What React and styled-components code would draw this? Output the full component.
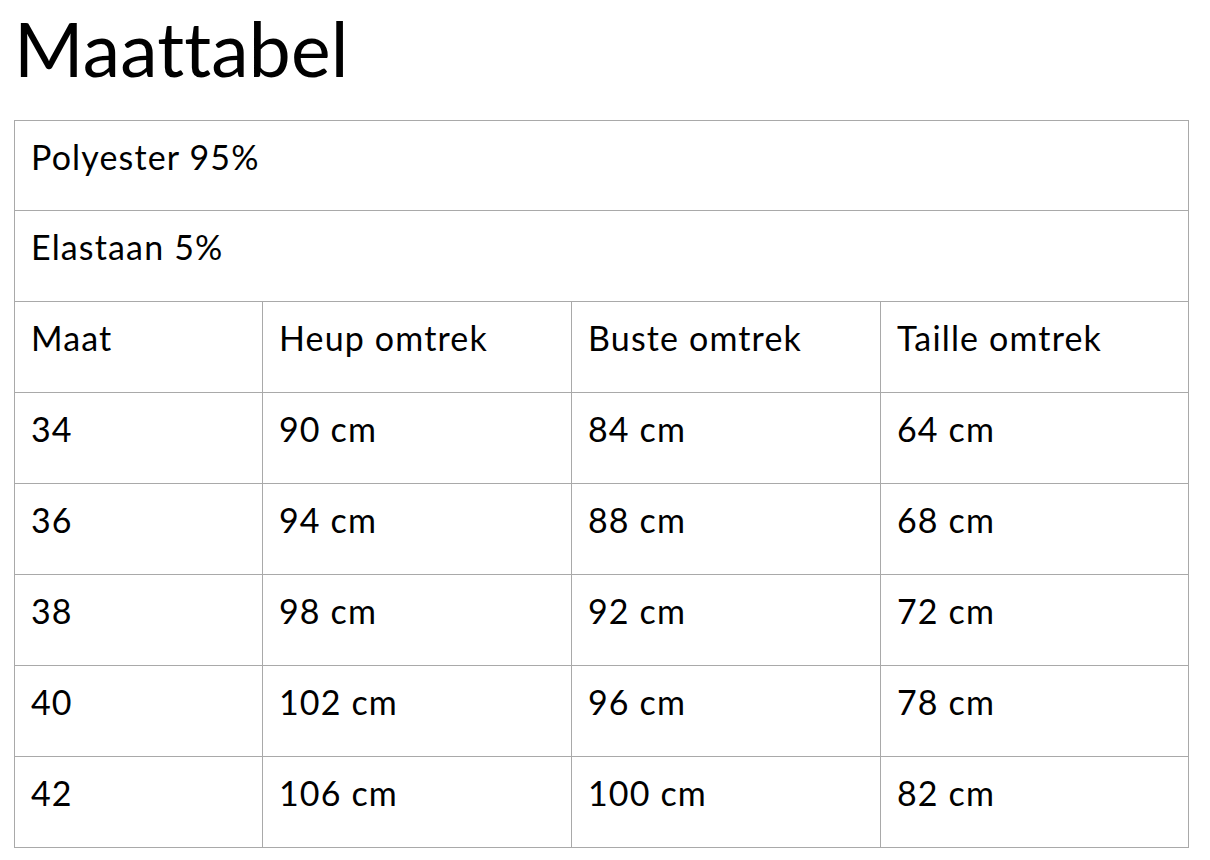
import React from "react";
import styled, { createGlobalStyle } from "styled-components";

const Global = createGlobalStyle`
  html, body { margin: 0; padding: 0; background: #fff; }
  body { font-family: Lato, "Noto Sans", sans-serif; color: #000; }
`;

const Page = styled.div`
  display: flex;
  flex-direction: column;
  padding: 3px 0 0 14px;
  gap: 27px;
`;

const Title = styled.h1`
  margin: 0;
  font-family: Lato, sans-serif;
  font-weight: 400;
  font-size: 75px;
  letter-spacing: 0.2px;
  line-height: 1.2;
  height: 90px;
`;

const Table = styled.div`
  display: grid;
  grid-template-columns: 247px 308px 308px 307px;
  grid-template-rows: 89px;
  grid-auto-rows: 90px;
  gap: 1px;
  padding: 1px;
  background: #a9a9a9;
  width: max-content;
`;

const Cell = styled.div`
  background: #fff;
  grid-column: ${(p) => (p.$full ? "1 / -1" : "auto")};
  padding: 16px 0 0 16px;
  font-size: 34px;
  letter-spacing: 1.15px;
  line-height: 1.2;
  white-space: nowrap;
`;

const rows = [
  ["Maat", "Heup omtrek", "Buste omtrek", "Taille omtrek"],
  ["34", "90 cm", "84 cm", "64 cm"],
  ["36", "94 cm", "88 cm", "68 cm"],
  ["38", "98 cm", "92 cm", "72 cm"],
  ["40", "102 cm", "96 cm", "78 cm"],
  ["42", "106 cm", "100 cm", "82 cm"],
];

export default function App() {
  return (
    <Page>
      <Global />
      <Title>Maattabel</Title>
      <Table>
        <Cell $full>Polyester 95%</Cell>
        <Cell $full>Elastaan 5%</Cell>
        {rows.map((r, i) =>
          r.map((c, j) => <Cell key={`${i}-${j}`}>{c}</Cell>)
        )}
      </Table>
    </Page>
  );
}
